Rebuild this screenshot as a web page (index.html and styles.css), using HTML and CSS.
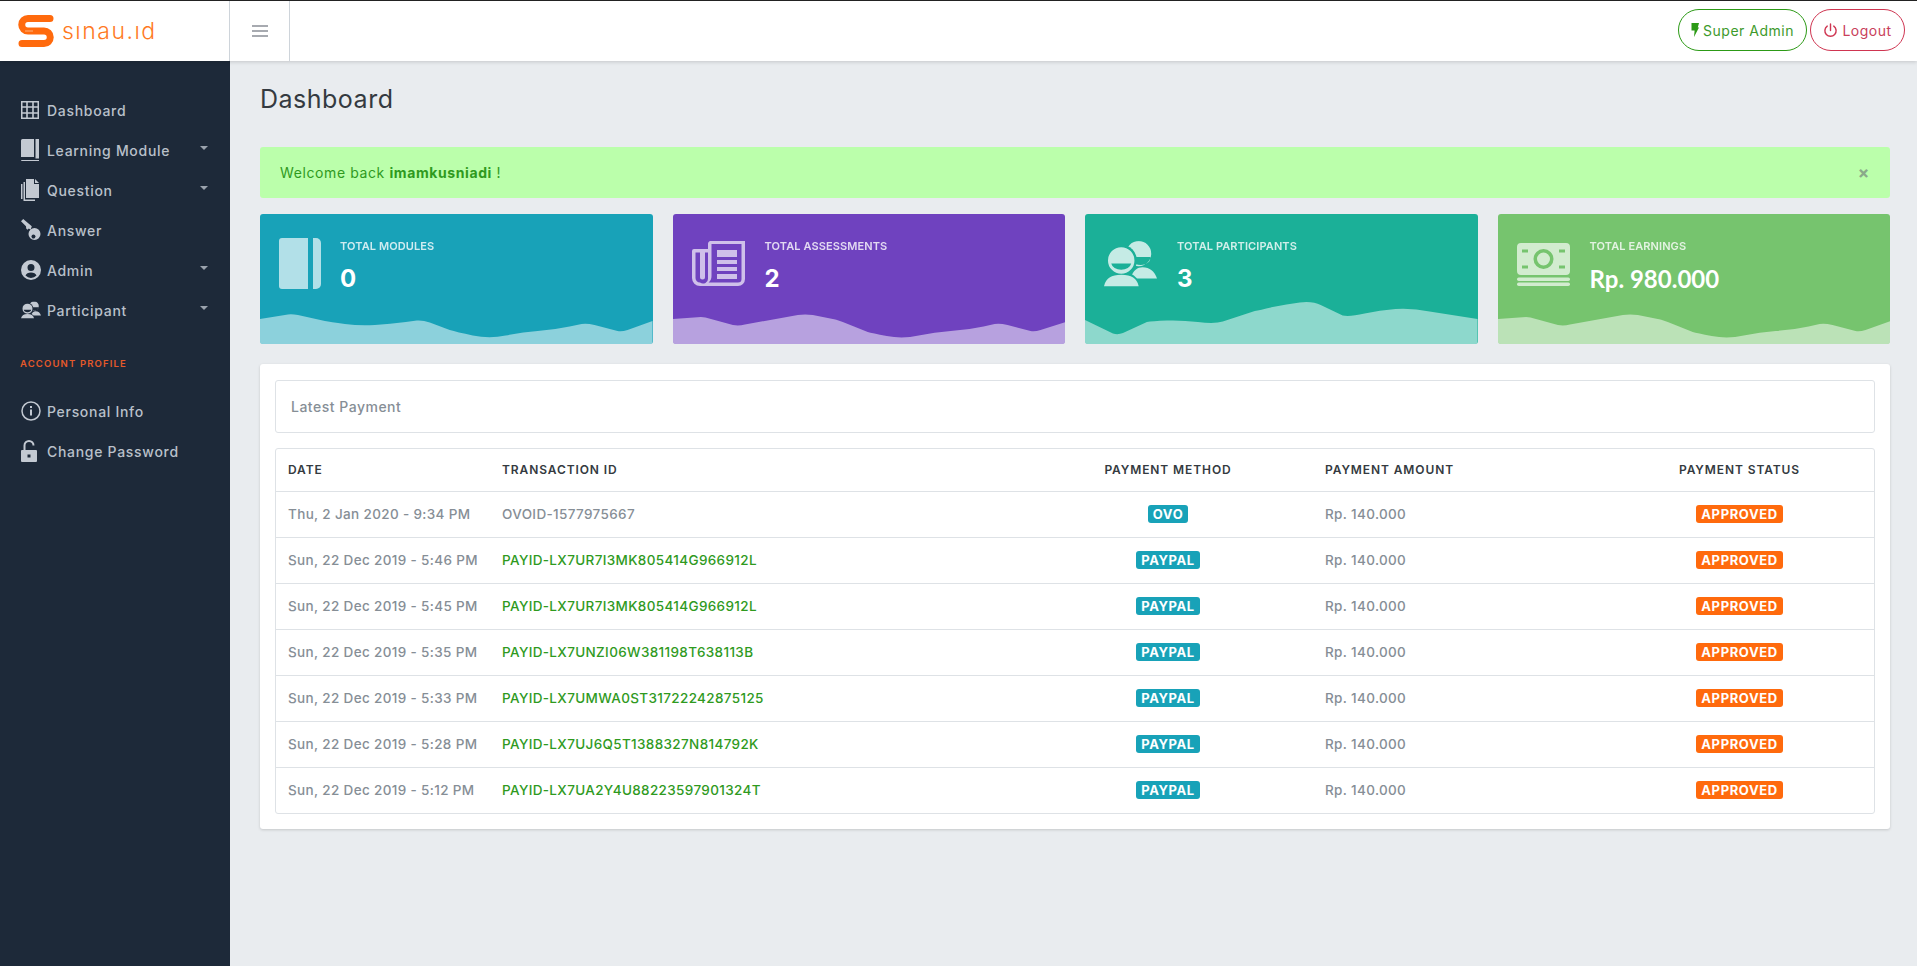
FILE: index.html
```html
<!DOCTYPE html>
<html lang="en">
<head>
<meta charset="utf-8">
<title>Dashboard - sinau.id</title>
<link rel="stylesheet" href="styles.css">
</head>
<body>
<header class="topbar">
  <div class="brand">
    <svg class="brand-mark" viewBox="0 0 38 34"><path d="M33 4.500H11a6.250 6.250 0 0 0 0 12.500h16a6.250 6.250 0 0 1 0 12.500H5" fill="none" stroke="#ff6a0d" stroke-width="7" stroke-linecap="round"/><path d="M8 17h8" stroke="#ffb27f" stroke-width="1"/></svg>
    <span class="brand-name">sınau.ıd</span>
  </div>
  <button class="toggler" aria-label="Menu"><svg viewBox="0 0 16 12" class="toggler-icon"><path d="M0 1h16M0 6h16M0 11h16" stroke="#8a8f96" stroke-width="1.300"/></svg></button>
  <div class="top-actions">
    <a class="pill pill-green"><svg viewBox="0 0 8 14" class="pill-bolt"><path d="M0.500 0H8L6.800 4.500 8 4.500 3 14 3.600 7.500H0.500Z" fill="#2c9a16"/></svg>Super Admin</a>
    <a class="pill pill-red"><svg viewBox="0 0 16 16" class="pill-power"><path d="M8 1v7M4.500 3.300a6 6 0 1 0 7 0" fill="none" stroke="#cf3551" stroke-width="1.500" stroke-linecap="round"/></svg>Logout</a>
  </div>
</header>
<div class="shell">
  <aside class="sidebar">
    <nav class="nav">
      <a class="nav-item"><svg class="nav-icon" viewBox="0 -1 20 20"><path fill-rule="evenodd" d="M0 0h18v18H0zM1.500 1.500v3.700h3.700V1.500zm5.300 0v3.700h4.400V1.500zm6 0v3.700h3.700V1.500zM1.500 6.800v4.400h3.700V6.800zm5.300 0v4.400h4.400V6.800zm6 0v4.400h3.700V6.800zM1.500 12.800v3.700h3.700v-3.700zm5.300 0v3.700h4.400v-3.700zm6 0v3.700h3.700v-3.700z"/></svg><span>Dashboard</span></a>
      <a class="nav-item has-caret"><svg class="nav-icon" viewBox="0 0 20 22"><path d="M0 1.500A1.500 1.500 0 0 1 1.500 0H13v18H0z"/><path d="M14.500 0H18v19.500H0V21H18v1H1a1 1 0 0 1-1-1v-1.500h14.500z"/></svg><span>Learning Module</span></a>
      <a class="nav-item has-caret"><svg class="nav-icon" viewBox="0 0 20 22"><path d="M5 0h8v5h5v14H5z"/><path d="M14 0l4 4h-4z"/><path d="M2.500 3H4v17.500h10V22H2.500zM0 5h1.500v15H0z"/></svg><span>Question</span></a>
      <a class="nav-item"><svg class="nav-icon" viewBox="0 0 20 22"><path d="M0 2.200L2.200 0l8.600 7.200-1.200 3.600-1.800-1.400-1.300 1.300-1.300-1.300-.2-2.200z"/><path fill-rule="evenodd" d="M13.500 9a6 6 0 1 1 0 12 6 6 0 0 1 0-12zm.3 7a2 2 0 1 0 0 3 2 2 0 0 0 0-3z"/></svg><span>Answer</span></a>
      <a class="nav-item has-caret"><svg class="nav-icon" viewBox="0 0 20 20"><path fill-rule="evenodd" d="M10 0a10 10 0 1 1 0 20 10 10 0 0 1 0-20zm0 4a3.500 3.500 0 1 0 0 7 3.500 3.500 0 0 0 0-7zm0 8.500c-2.800 0-4.700 1-5.500 3a7.500 7.500 0 0 0 11 0c-.8-2-2.700-3-5.500-3z"/></svg><span>Admin</span></a>
      <a class="nav-item has-caret"><svg class="nav-icon" viewBox="0 0 22 19"><use href="#people"/></svg><span>Participant</span></a>
    </nav>
    <div class="nav-heading">ACCOUNT PROFILE</div>
    <nav class="nav">
      <a class="nav-item"><svg class="nav-icon" viewBox="0 0 20 20"><circle cx="10" cy="10" r="9" fill="none" stroke="currentColor" stroke-width="1.500"/><rect x="9" y="8.500" width="2" height="6"/><rect x="9" y="5" width="2" height="2"/></svg><span>Personal Info</span></a>
      <a class="nav-item"><svg class="nav-icon" viewBox="0 0 18 22" preserveAspectRatio="xMinYMid meet"><path fill-rule="evenodd" d="M2.500 10V5.500a5.500 5.500 0 0 1 11 0H11.500a3.500 3.500 0 0 0-7 0V10h10.500a1 1 0 0 1 1 1v10a1 1 0 0 1-1 1H1a1 1 0 0 1-1-1V11a1 1 0 0 1 1-1zm4 4.500v3h3v-3z"/></svg><span>Change Password</span></a>
    </nav>
  </aside>
  <main class="main">
    <h1 class="page-title">Dashboard</h1>
    <div class="alert">
      <span>Welcome back <strong>imamkusniadi</strong> !</span>
      <span class="alert-close">×</span>
    </div>
    <section class="stats">
      <article class="stat stat-blue">
        <svg class="stat-icon icon-book" viewBox="0 0 42 51"><path d="M3 0h26v51H3a3 3 0 0 1-3-3V3a3 3 0 0 1 3-3z"/><path d="M34 0h3a5 5 0 0 1 5 5v41a5 5 0 0 1-5 5h-3z"/></svg>
        <div class="stat-body"><div class="stat-label">TOTAL MODULES</div><div class="stat-value">0</div></div>
        <svg class="wave" viewBox="0 0 393 130" preserveAspectRatio="none"><path d="M0 105L28 100.500Q32 100 38 101L65 107Q70 108 85 110Q100 112 115 111Q130 110 146 108L157 106.500Q163 106 170 108.500L190 116Q197 118 213 121.500Q230 125 246 121.500Q263 118 278 117Q293 116 310 112.500L322 110Q327 109 335 111L358 117Q362 118 368 116L393 107V130H0Z"/></svg>
      </article>
      <article class="stat stat-purple">
        <svg class="stat-icon icon-paper" viewBox="0 0 53 45"><path fill-rule="evenodd" d="M20 0h33v38a7 7 0 0 1-7 7H8a8 8 0 0 1-8-8V10a2 2 0 0 1 2-2h14V3a3 3 0 0 1 4-3zM19.500 3v32c0 3-1 5-3 6.500H46a3.500 3.500 0 0 0 3.500-3.500V3zM3.500 11.500V37a4.500 4.500 0 0 0 4.500 4.500A5 5 0 0 0 16 37V11.500h-3V36a2.500 2.500 0 0 1-5 0V11.500z"/><path d="M25 9h20v7H25zM25 19h20v4H25zM25 26h20v4H25zM25 33h20v5H25z"/></svg>
        <div class="stat-body"><div class="stat-label">TOTAL ASSESSMENTS</div><div class="stat-value">2</div></div>
        <svg class="wave" viewBox="0 0 393 130" preserveAspectRatio="none"><path d="M0 105L28 103Q32 103 38 105L60 111Q66 112 72 110.500L125 101Q132 100 140 101L160 105Q162 105 170 108L195 118Q199 119 214 122Q230 125 246 121.500Q262 118 278 117Q295 116 311 112.500L322 110Q327 109 335 111L358 117Q362 118 368 116L393 108V130H0Z"/></svg>
      </article>
      <article class="stat stat-teal">
        <svg class="stat-icon icon-people" viewBox="0 0 22 19"><use href="#people"/></svg>
        <div class="stat-body"><div class="stat-label">TOTAL PARTICIPANTS</div><div class="stat-value">3</div></div>
        <svg class="wave" viewBox="0 0 393 130" preserveAspectRatio="none"><path d="M0 106L28 119.500Q33 121 38 119L62 108Q67 107 82 106.500Q97 106 113 108Q130 110 138 107.500L170 97Q175 96 188 93Q202 90 215 88.500Q228 87 236 91L258 101.500Q265 103 280 99.500Q295 96 311 95Q328 94 345 97.500L393 105V130H0Z"/></svg>
      </article>
      <article class="stat stat-green">
        <svg class="stat-icon icon-money" viewBox="0 0 53 43"><path fill-rule="evenodd" d="M4 0h45a4 4 0 0 1 4 4v24a4 4 0 0 1-4 4H4a4 4 0 0 1-4-4V4a4 4 0 0 1 4-4zm22.500 6a10 10 0 1 0 0 20 10 10 0 0 0 0-20zm0 3.500a6.500 6.500 0 1 1 0 13 6.500 6.500 0 0 1 0-13zM5 6.500v3h6v-3zm37 0v3h6v-3zM5 22.500v3h6v-3zm37 0v3h6v-3z"/><rect y="34.500" width="53" height="3.500" rx="1.700"/><rect y="39.500" width="53" height="3.500" rx="1.700"/></svg>
        <div class="stat-body"><div class="stat-label">TOTAL EARNINGS</div><div class="stat-value stat-money">Rp. 980.000</div></div>
        <svg class="wave" viewBox="0 0 393 130" preserveAspectRatio="none"><path d="M0 105L28 103Q32 103 38 105L60 111Q66 112 72 110.500L125 101Q132 100 140 101L160 105Q162 105 170 108L195 118Q199 119 214 122Q230 125 246 121.500Q262 118 278 117Q295 116 311 112.500L322 110Q327 109 335 111L358 117Q362 118 368 116L393 107V130H0Z"/></svg>
      </article>
    </section>
    <section class="panel">
      <div class="panel-head">Latest Payment</div>
      <div class="table-wrap">
        <table class="pay-table">
          <colgroup><col class="c-date"><col class="c-id"><col class="c-method"><col class="c-amount"><col class="c-status"></colgroup>
          <thead><tr><th>DATE</th><th>TRANSACTION ID</th><th class="center">PAYMENT METHOD</th><th>PAYMENT AMOUNT</th><th class="center">PAYMENT STATUS</th></tr></thead>
          <tbody>
            <tr><td>Thu, 2 Jan 2020 - 9:34 PM</td><td>OVOID-1577975667</td><td class="center"><span class="badge badge-info">OVO</span></td><td>Rp. 140.000</td><td class="center"><span class="badge badge-orange">APPROVED</span></td></tr>
            <tr><td>Sun, 22 Dec 2019 - 5:46 PM</td><td class="txn">PAYID-LX7UR7I3MK805414G966912L</td><td class="center"><span class="badge badge-info">PAYPAL</span></td><td>Rp. 140.000</td><td class="center"><span class="badge badge-orange">APPROVED</span></td></tr>
            <tr><td>Sun, 22 Dec 2019 - 5:45 PM</td><td class="txn">PAYID-LX7UR7I3MK805414G966912L</td><td class="center"><span class="badge badge-info">PAYPAL</span></td><td>Rp. 140.000</td><td class="center"><span class="badge badge-orange">APPROVED</span></td></tr>
            <tr><td>Sun, 22 Dec 2019 - 5:35 PM</td><td class="txn">PAYID-LX7UNZI06W381198T638113B</td><td class="center"><span class="badge badge-info">PAYPAL</span></td><td>Rp. 140.000</td><td class="center"><span class="badge badge-orange">APPROVED</span></td></tr>
            <tr><td>Sun, 22 Dec 2019 - 5:33 PM</td><td class="txn">PAYID-LX7UMWA0ST31722242875125</td><td class="center"><span class="badge badge-info">PAYPAL</span></td><td>Rp. 140.000</td><td class="center"><span class="badge badge-orange">APPROVED</span></td></tr>
            <tr><td>Sun, 22 Dec 2019 - 5:28 PM</td><td class="txn">PAYID-LX7UJ6Q5T1388327N814792K</td><td class="center"><span class="badge badge-info">PAYPAL</span></td><td>Rp. 140.000</td><td class="center"><span class="badge badge-orange">APPROVED</span></td></tr>
            <tr><td>Sun, 22 Dec 2019 - 5:12 PM</td><td class="txn">PAYID-LX7UA2Y4U88223597901324T</td><td class="center"><span class="badge badge-info">PAYPAL</span></td><td>Rp. 140.000</td><td class="center"><span class="badge badge-orange">APPROVED</span></td></tr>
          </tbody>
        </table>
      </div>
    </section>
  </main>
</div>
<svg class="defs" aria-hidden="true"><defs>
  <mask id="people-cut" maskUnits="userSpaceOnUse" x="0" y="0" width="22" height="19">
    <rect width="22" height="19" fill="#fff"/>
    <circle cx="7.150" cy="8" r="6.500" fill="#000"/>
    <path d="M-1 19.500C0 15 3 12.700 7.200 12.700S14.500 15 15.500 19.500Z" fill="#000"/>
  </mask>
  <g id="people" fill-rule="evenodd">
    <g mask="url(#people-cut)">
      <path d="M14.400 0a5.200 5.200 0 1 1 0 10.400 5.200 5.200 0 0 1 0-10.400zM13 6.600H19.200A4 3 0 0 1 13 9.400z"/>
      <path d="M11 15.500C12 12 14 10.800 16 10.800C19 10.800 21 12.500 22 15.500Z"/>
    </g>
    <path d="M7.150 2.500a5.500 5.500 0 1 1 0 11 5.500 5.500 0 0 1 0-11zM3 9.300H11.300A4.200 3 0 0 1 3 9.300Z"/>
    <path d="M0 18.700C.8 15.500 3 14 7.200 14S13.600 15.500 14.400 18.700Z"/>
  </g>
</defs></svg>
</body>
</html>
```

FILE: styles.css
```css
* { box-sizing: border-box; }
html, body { margin: 0; height: 100%; }
body {
  display: flex;
  flex-direction: column;
  height: 966px;
  overflow: hidden;
  background: #e9ecef;
  font-family: Inter, "Open Sans", sans-serif;
  font-size: 14px;
  color: #868e96;
}
.defs { width: 0; height: 0; position: absolute; }

.topbar {
  display: flex;
  align-items: stretch;
  flex: none;
  height: 61px;
  background: #fff;
  border-top: 1px solid #222;
  box-shadow: 0 1px 4px rgba(0,0,0,.16);
  position: relative;
  z-index: 2;
}
.brand {
  display: flex;
  align-items: center;
  gap: 7px;
  width: 230px;
  padding: 0 0 0 17px;
  border-right: 1px solid #ced4da;
}
.brand-mark { width: 38px; height: 34px; flex: none; }
.brand-name {
  font-family: Inter, sans-serif;
  font-weight: 300;
  font-size: 23px;
  letter-spacing: 1.500px;
  color: #ff7a1f;
  line-height: 1;
}
.toggler {
  width: 60px;
  padding: 0;
  border: 0;
  border-right: 1px solid #ced4da;
  background: none;
  display: flex;
  align-items: center;
  justify-content: center;
}
.toggler-icon { width: 16px; height: 12px; }
.top-actions {
  margin-left: auto;
  display: flex;
  align-items: center;
  gap: 3px;
  padding: 0 12px 2px 0;
}
.pill {
  display: flex;
  align-items: center;
  justify-content: center;
  gap: 4px;
  height: 42px;
  border-radius: 21px;
  background: #fff;
  font-size: 14px;
  font-weight: 400;
  letter-spacing: .5px;
  white-space: nowrap;
}
.pill-green { width: 129px; color: #3d9a2c; border: 1px solid #2c9a16; }
.pill-red { width: 95px; color: #c9405a; border: 1px solid #cf3551; }
.pill-bolt { width: 8px; height: 14px; }
.pill-power { width: 15px; height: 15px; }

.shell { flex: 1; display: flex; min-height: 0; }
.sidebar {
  flex: none;
  width: 230px;
  padding: 29px 0 0;
  background: #1d2939;
  color: #c3c9d2;
}
.nav { display: flex; flex-direction: column; }
.nav-item {
  display: flex;
  align-items: center;
  position: relative;
  height: 40px;
  padding-left: 21px;
  color: #b9c0ca;
  font-size: 14px;
  font-weight: 500;
  letter-spacing: .7px;
}
.nav-icon { width: 20px; height: 22px; flex: none; margin-right: 6px; fill: #c3c9d2; color: #c3c9d2; }
.has-caret::after {
  content: "";
  position: absolute;
  right: 22px;
  top: 16px;
  border: 4px solid transparent;
  border-top-color: #9aa2ad;
  border-bottom: 0;
}
.nav-heading {
  margin: 28px 0 21px 20px;
  color: #e5592a;
  font-size: 9.500px;
  line-height: 12px;
  font-weight: 600;
  letter-spacing: 1.150px;
}

.main { flex: 1; min-width: 0; padding: 23px 27px 0 30px; }
.page-title {
  margin: 0 0 33px;
  color: #343a40;
  font-size: 25px;
  line-height: 30px;
  font-weight: 400;
  letter-spacing: .5px;
}
.alert {
  display: flex;
  align-items: center;
  justify-content: space-between;
  height: 51px;
  padding: 0 20px;
  border-radius: 3px;
  background: #bbffab;
  color: #2f9a1e;
  font-size: 14px;
  letter-spacing: .6px;
}
.alert strong { font-weight: 700; }
.alert-close { color: #8aa98a; font-size: 17px; font-weight: 700; }

.stats {
  display: grid;
  grid-template-columns: repeat(4, 1fr);
  gap: 20px;
  margin-top: 16px;
}
.stat {
  display: flex;
  align-items: flex-start;
  gap: 19px;
  position: relative;
  height: 130px;
  padding: 24px 0 0 19px;
  border-radius: 3px;
  overflow: hidden;
  color: #fff;
}
.stat-blue { background: #18a2b8; }
.stat-purple { background: #6f42bf; }
.stat-teal { background: #1bb098; }
.stat-green { background: #76c46e; }
.stat-icon { flex: none; fill: #fff; fill-opacity: .67; }
.icon-book { width: 42px; height: 51px; }
.icon-paper { width: 53px; height: 45px; margin: 3px 1px 0 0; }
.icon-people { width: 53px; height: 46px; margin: 3px 1px 0 0; fill-opacity: .75; }
.icon-money { width: 53px; height: 43px; margin: 5px 1px 0 0; }
.stat-body { min-width: 0; }
.stat-label {
  font-size: 11px;
  line-height: 16px;
  font-weight: 600;
  letter-spacing: .1px;
  opacity: .8;
}
.stat-value {
  margin-top: 10px;
  font-size: 24px;
  line-height: 30px;
  font-weight: 700;
}
.stat-money { font-family: Lato, sans-serif; letter-spacing: 0; }
.wave { position: absolute; left: 0; top: 0; width: 100%; height: 100%; fill: #fff; fill-opacity: .5; }

.panel {
  margin-top: 20px;
  padding: 16px 15px 15px;
  border-radius: 3px;
  background: #fff;
  box-shadow: 0 1px 3px rgba(0,0,0,.16);
}
.panel-head {
  display: flex;
  align-items: center;
  height: 53px;
  padding: 0 15px 1px;
  border: 1px solid #dee2e6;
  border-radius: 3px;
  color: #868e96;
  font-size: 14px;
  font-weight: 500;
  letter-spacing: .5px;
}
.table-wrap {
  margin-top: 15px;
  border: 1px solid #dee2e6;
  border-radius: 3px;
  overflow: hidden;
}
.pay-table { width: 100%; border-collapse: collapse; table-layout: fixed; }
.c-date { width: 214px; }
.c-id { width: 533px; }
.c-method { width: 290px; }
.c-amount { width: 292px; }
.pay-table th {
  height: 42px;
  padding: 0 12px;
  color: #343a40;
  font-size: 12px;
  font-weight: 600;
  letter-spacing: .9px;
  text-align: left;
}
.pay-table td {
  height: 46px;
  padding: 0 12px;
  border-top: 1px solid #dee2e6;
  color: #868e96;
  font-size: 13.500px;
  font-weight: 500;
  letter-spacing: .35px;
  white-space: nowrap;
}
.pay-table .center { text-align: center; }
.pay-table .txn { color: #2f9a1e; }
.badge {
  display: inline-block;
  padding: 0 5px;
  border-radius: 3px;
  color: #fff;
  font-size: 13px;
  line-height: 18px;
  font-weight: 700;
  letter-spacing: .6px;
  vertical-align: middle;
}
.badge-info { background: #18a2b8; }
.badge-orange { background: #ff6a0d; }
```
